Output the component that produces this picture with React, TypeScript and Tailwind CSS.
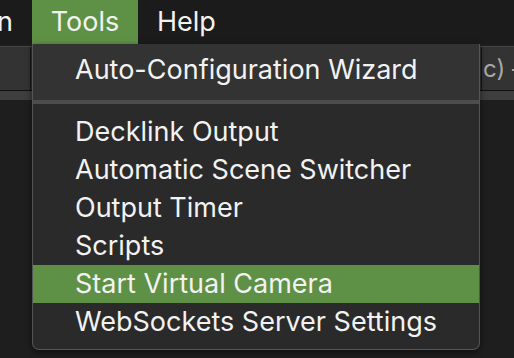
export default function App() {
  const items = [
    "Decklink Output",
    "Automatic Scene Switcher",
    "Output Timer",
    "Scripts",
    "Start Virtual Camera",
    "WebSockets Server Settings",
  ];
  const active = "Start Virtual Camera";

  return (
    <div
      className="relative w-[514px] h-[358px] overflow-hidden bg-[#1e1e1e] text-[27px] text-[#f2f2f2]"
      style={{ fontFamily: "Inter, 'Noto Sans', sans-serif" }}
    >
      {/* menu bar */}
      <div className="flex h-[44px] items-center bg-[#1b1b1b]">
        <div className="flex w-[32px] h-full items-center justify-end overflow-hidden pr-[19px]">
          <span className="whitespace-nowrap">Collection</span>
        </div>
        <div className="flex h-full w-[106px] items-center justify-center bg-[#5e9145]">
          Tools
        </div>
        <div className="flex h-full items-center pl-[19px]">Help</div>
      </div>

      {/* toolbar behind the menu */}
      <div className="mt-[2px] flex h-[44px] border-t border-[#454545] bg-[#333333]">
        <div className="w-[31px] border-r border-[#151515]" />
        <div className="flex-1" />
        <div className="flex w-[33px] items-center overflow-hidden border-l border-[#151515] pl-[1px] text-[24px] text-[#a8a8a8]">
          <span className="shrink-0 whitespace-nowrap">c) –</span>
        </div>
      </div>
      <div className="h-[10px] bg-[#3e3e3e] border-t border-[#111]" />

      {/* dropdown */}
      <div className="absolute left-[32px] top-[44px] w-[448px] h-[306px] overflow-hidden rounded-b-[7px] border-x border-b border-[#555555] bg-[#2a2a2a] shadow-[0_2px_6px_rgba(0,0,0,0.5)]">
        <div className="h-[56px] bg-[#333333] pt-[7px]">
          <div className="flex h-[38px] items-center pl-[42px]">Auto-Configuration Wizard</div>
        </div>
        <div className="h-[4px] bg-[#4c4c4c]" />
        <div className="pt-[9px]">
          {items.map((item) => (
            <div
              key={item}
              className={
                item === active
                  ? "flex h-[38px] items-center bg-[#5e9145] pl-[42px]"
                  : "flex h-[38px] items-center pl-[42px]"
              }
            >
              {item}
            </div>
          ))}
        </div>
      </div>
    </div>
  );
}
